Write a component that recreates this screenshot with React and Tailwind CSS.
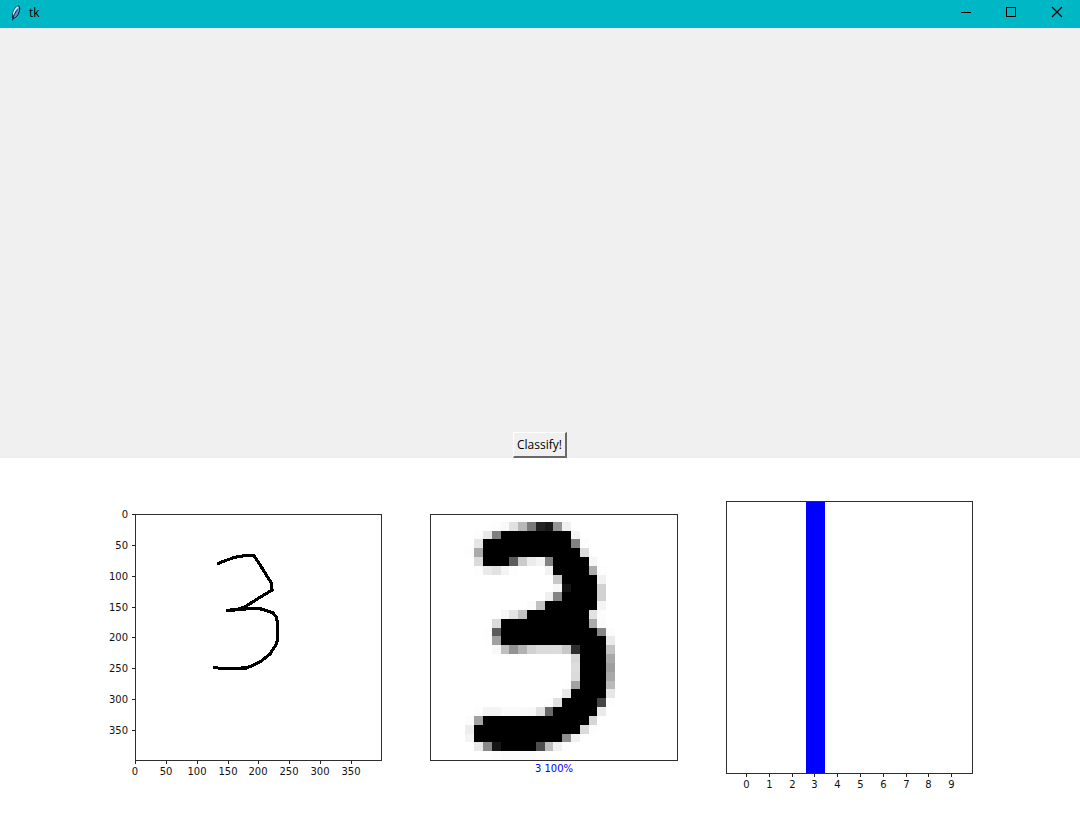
const DIGIT_ROWS = [
  [1, 7, 'fd f8 e1 b8 7a 24 19 94 f0'],
  [2, 5, 'fd e8 7f 00 00 00 00 00 00 00 00 f4'],
  [3, 5, 'e6 00 00 00 00 00 00 00 00 00 00 82 fc'],
  [4, 4, 'fd aa 00 00 00 00 00 00 00 00 00 00 00 dc'],
  [5, 5, 'db 00 00 00 5c cb ec f4 82 00 00 00 00 f6'],
  [6, 5, 'fd ea e2 f4 fd ff ff ff f2 00 00 00 00 ad fd'],
  [7, 14, 'c8 00 00 00 00 f1'],
  [8, 14, 'f8 12 00 00 00 d2'],
  [9, 13, 'f0 84 00 00 00 00 d2'],
  [10, 11, 'fb c2 00 00 00 00 00 00 f4'],
  [11, 8, 'f6 e4 c2 00 00 00 00 00 00 00 e2 fd'],
  [12, 7, 'db 00 00 00 00 00 00 00 00 00 00 aa fb'],
  [13, 6, 'fd 5c 00 00 00 00 00 00 00 00 00 00 00 86 fc'],
  [14, 6, 'fe a0 00 00 00 00 00 00 00 00 00 00 00 00 ea'],
  [15, 7, 'f8 bf 92 b2 d2 db db dc c8 2e 00 00 00 c2'],
  [16, 16, 'd8 00 00 00 a8'],
  [17, 16, 'dd 00 00 00 9e'],
  [18, 16, 'db 00 00 00 a8'],
  [19, 15, 'fe a2 00 00 00 ba'],
  [20, 15, 'e8 00 00 00 00 e6'],
  [21, 13, 'fd e0 00 00 00 00 44 fd'],
  [22, 5, 'fd f4 f4 fa fa fa f8 e0 68 00 00 00 00 00 ea'],
  [23, 4, 'fc a2 00 00 00 00 00 00 00 00 00 00 00 00 d6'],
  [24, 4, 'ed 00 00 00 00 00 00 00 00 00 00 00 00 db fd'],
  [25, 4, 'f4 00 00 00 00 00 00 00 00 00 00 90 f0'],
  [26, 5, 'e8 8a 16 00 00 00 00 4e be f0 fd'],
  [27, 7, 'fd fb fb fb fb fd'],
];

const colEdge = (i) => Math.round(5.2 + 8.8 * i);
const rowEdge = (i) => Math.round(15 + 8.82 * i);

const PIXEL_TICKS = [0, 50, 100, 150, 200, 250, 300, 350];
const CLASSES = [0, 1, 2, 3, 4, 5, 6, 7, 8, 9];

function Frame({ x, y, w, h }) {
  return <rect x={x} y={y} width={w} height={h} fill="none" stroke="#000" strokeOpacity="0.82" />;
}

function SketchPlot() {
  return (
    <svg width="280" height="300" className="shrink-0 text-[10px]" fill="#111" role="img" aria-label="Drawn digit">
      {PIXEL_TICKS.map((t) => {
        const d = Math.ceil((t * 246) / 400);
        return (
          <g key={t}>
            <path d={`M27 ${16.5 + d}H30M${30.5 + d} 263V266`} stroke="#222" />
            <text x="23" y={20 + d} textAnchor="end">{t}</text>
            <text x={30 + d} y="277" textAnchor="middle">{t}</text>
          </g>
        );
      })}
      <polyline
        points="112,66 120,62.7 130,59.3 141.7,57.3 148.5,57.3 154.5,66 166.5,85.3 167,92 153.3,100.3 140.3,108.7 130,112 121.3,112.3 130,111.7 145,110.7 156.7,111 167.7,114.7 171.7,119.3 172.7,128.7 172.7,141.3 171.3,146 165,156 155,164 141.7,170 115,170.3 108.3,169.3"
        fill="none"
        stroke="#000"
        strokeWidth="3.1"
        shapeRendering="crispEdges"
      />
      <Frame x={30.5} y={16.5} w={246} h={246} />
    </svg>
  );
}

function PixelPlot() {
  return (
    <svg width="255" height="300" className="shrink-0 text-[10px]" role="img" aria-label="Downsampled digit">
      <g shapeRendering="crispEdges">
        {DIGIT_ROWS.map(([row, start, values]) =>
          values.split(' ').map((v, i) => {
            const x = colEdge(start + i);
            const y = rowEdge(row);
            return (
              <rect
                key={`${row}-${i}`}
                x={x}
                y={y}
                width={colEdge(start + i + 1) - x}
                height={rowEdge(row + 1) - y}
                fill={`#${v}${v}${v}`}
              />
            );
          })
        )}
      </g>
      <Frame x={5.5} y={16.5} w={247} h={246} />
      <text x="129" y="274" textAnchor="middle" fill="#0000ff">3 100%</text>
    </svg>
  );
}

function ProbabilityPlot() {
  return (
    <svg width="255" height="300" className="shrink-0 text-[10px]" fill="#111" role="img" aria-label="Class probabilities">
      <rect x="86" y="4" width="19" height="271" fill="#0000ff" />
      {CLASSES.map((c) => {
        const x = 26.5 + Math.round(c * 22.8);
        return (
          <g key={c}>
            <path d={`M${x} 276V279`} stroke="#222" />
            <text x={x} y="290" textAnchor="middle">{c}</text>
          </g>
        );
      })}
      <Frame x={6.5} y={3.5} w={246} h={272} />
    </svg>
  );
}

function Feather() {
  return (
    <svg width="16" height="16" viewBox="0 0 16 16" aria-hidden="true">
      <path d="M5 13.500C3.800 9.500 5.500 3.500 10.500 .6C12.300 1.500 12 6 10 9.500C8.500 12 7 13 5 13.500Z" fill="#5b95dc" stroke="#06101f" strokeWidth="1" />
      <path d="M5.500 9.500C6 6 8 3.300 10 1.800" fill="none" stroke="#e4f3ff" strokeWidth="1.500" />
      <path d="M4.500 15.500C5.200 11.500 7 7.500 9.500 4.500" fill="none" stroke="#06101f" strokeWidth=".8" />
    </svg>
  );
}

function TitleButton({ label, children }) {
  return (
    <button type="button" aria-label={label} className="flex h-6 w-[46px] items-center justify-center">
      <svg width="12" height="12" fill="none" stroke="#000" aria-hidden="true">{children}</svg>
    </button>
  );
}

export default function App() {
  return (
    <div className="flex min-h-screen flex-col bg-white font-['DejaVu_Sans',sans-serif]">
      <header className="flex h-7 items-start justify-between bg-[#00b7c5] pl-2 font-['Open_Sans',sans-serif] text-xs text-black">
        <div className="flex h-[26px] items-center gap-[5px]">
          <Feather />
          <span>tk</span>
        </div>
        <div className="flex">
          <TitleButton label="Minimize"><path d="M2 6.500H12" /></TitleButton>
          <TitleButton label="Maximize"><rect x="1.500" y="1.500" width="9" height="9" /></TitleButton>
          <TitleButton label="Close"><path d="M1 1L11 11M11 1L1 11" strokeWidth="1.200" /></TitleButton>
        </div>
      </header>
      <main className="flex flex-col">
        <section className="flex flex-col items-center bg-[#f0f0f0]">
          <canvas width="400" height="400" className="m-0.5" />
          <button
            type="button"
            className="h-[26px] border-t border-r-2 border-b-2 border-l border-t-white border-r-[#696969] border-b-[#696969] border-l-white bg-[#f0f0f0] px-[3px] font-['Open_Sans',sans-serif] text-xs text-black"
          >
            Classify!
          </button>
        </section>
        <section className="flex justify-center gap-10 pt-10">
          <SketchPlot />
          <PixelPlot />
          <ProbabilityPlot />
        </section>
      </main>
    </div>
  );
}
